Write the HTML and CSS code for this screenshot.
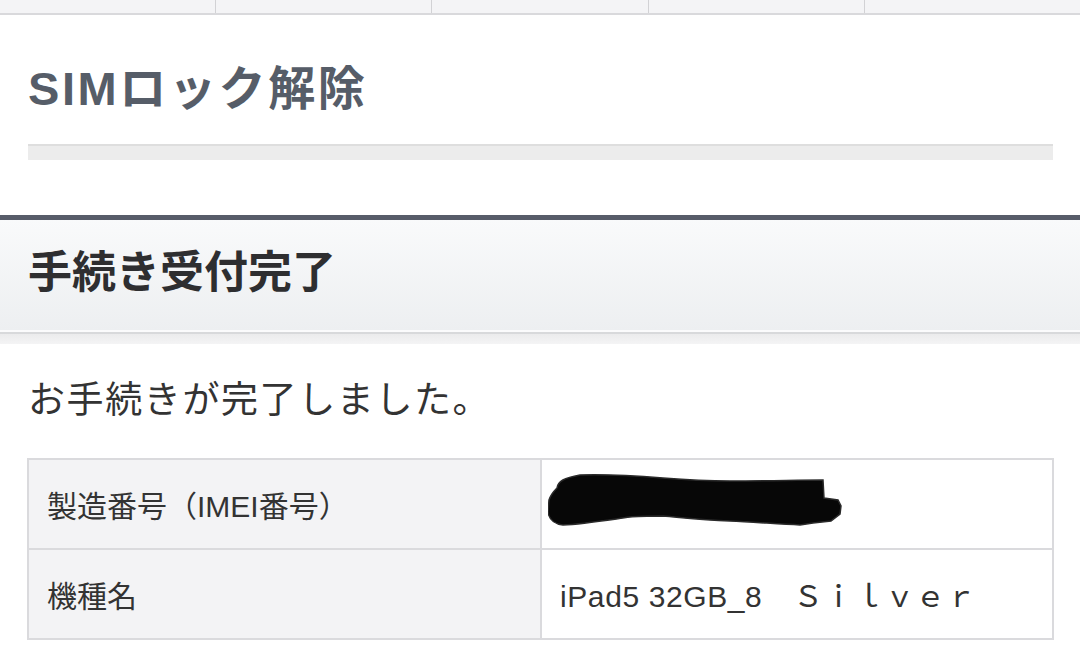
FILE: index.html
```html
<!DOCTYPE html>
<html lang="ja">
<head>
<meta charset="utf-8">
<link rel="stylesheet" href="styles.css">
</head>
<body>
<nav class="tabs">
  <div class="tab"></div>
  <div class="tab"></div>
  <div class="tab"></div>
  <div class="tab"></div>
  <div class="tab"></div>
</nav>
<section class="page-title">
  <h1 class="title">SIMロック解除</h1>
  <div class="title-bar"></div>
</section>
<section class="result">
  <div class="result-head">
    <h2 class="result-title">手続き受付完了</h2>
  </div>
  <div class="result-shadow"></div>
  <p class="message">お手続きが完了しました。</p>
  <table class="info">
    <tr>
      <th>製造番号（IMEI番号）</th>
      <td class="redacted">
        <svg width="300" height="60" viewBox="0 0 300 60" class="scribble">
          <path d="M9 14 C10 7 16 4 32 1 C60 0 90 2 115 4 C140 6 160 7 182 7 C220 7 250 6 275 6 L276 24 L290 26 L293 32 L292 40 L283 47 L265 49 L252 51 C230 50 205 48 182 47 C150 46 130 43 115 42 C100 42 90 42 82 43 C60 46 35 50 15 51 C6 50 1 45 0 38 L1 26 C3 20 6 17 9 14 Z" fill="#070707" stroke="#2a2a2a" stroke-width="1.5"/>
        </svg>
      </td>
    </tr>
    <tr>
      <th>機種名</th>
      <td class="model">iPad5 32GB_8　Ｓｉｌｖｅｒ</td>
    </tr>
  </table>
</section>
</body>
</html>
```

FILE: styles.css
```css
* { box-sizing: border-box; }
html, body { margin: 0; padding: 0; background: #ffffff; }
body {
  width: 1080px;
  height: 671px;
  overflow: hidden;
  font-family: "Liberation Sans", "Noto Sans CJK JP", sans-serif;
  color: #333333;
}
.tabs {
  display: flex;
  height: 15px;
  background: #f4f4f6;
  border-bottom: 2px solid #d9d9dc;
}
.tab {
  flex: 1;
  border-right: 1px solid #d2d2d5;
}
.tab:last-child { border-right: none; }

.page-title {
  padding: 44px 27px 0 28px;
}
.title {
  margin: 0;
  font-size: 47px;
  line-height: 60px;
  font-weight: bold;
  letter-spacing: 2.6px;
  color: #565d68;
}
.title-bar {
  margin-top: 25px;
  height: 16px;
  background: #ececec;
  border-top: 2px solid #dedede;
}

.result {
  margin-top: 55px;
  border-top: 5px solid #575c69;
}
.result-head {
  height: 112px;
  padding: 0 28px;
  display: flex;
  align-items: center;
  background: linear-gradient(#f9fafb, #edeff1);
  border-bottom: 2px solid #fbfbfc;
}
.result-title {
  margin: 0;
  font-size: 44px;
  font-weight: bold;
  line-height: 50px;
  color: #2e2e30;
  position: relative;
  top: -2px;
}
.result-shadow {
  height: 12px;
  border-top: 2px solid #d8d9db;
  background: linear-gradient(#ebebec, #f4f4f5);
}
.message {
  margin: 35px 0 0 28px;
  font-size: 37px;
  line-height: 44px;
  letter-spacing: 1.6px;
  color: #333333;
}
.info {
  margin: 35px 0 0 27px;
  width: 1027px;
  border-collapse: collapse;
  font-size: 30px;
  color: #333333;
}
.info th, .info td {
  border: 2px solid #dadadd;
  height: 90px;
  padding: 0 0 0 18px;
  text-align: left;
  vertical-align: middle;
  font-weight: normal;
}
.info th {
  width: 513px;
  background: #f3f3f5;
}
.info td { background: #ffffff; }
.info td.redacted { padding-left: 6px; }
.info td.model { letter-spacing: 0.6px; }
.scribble { display: block; }
```
